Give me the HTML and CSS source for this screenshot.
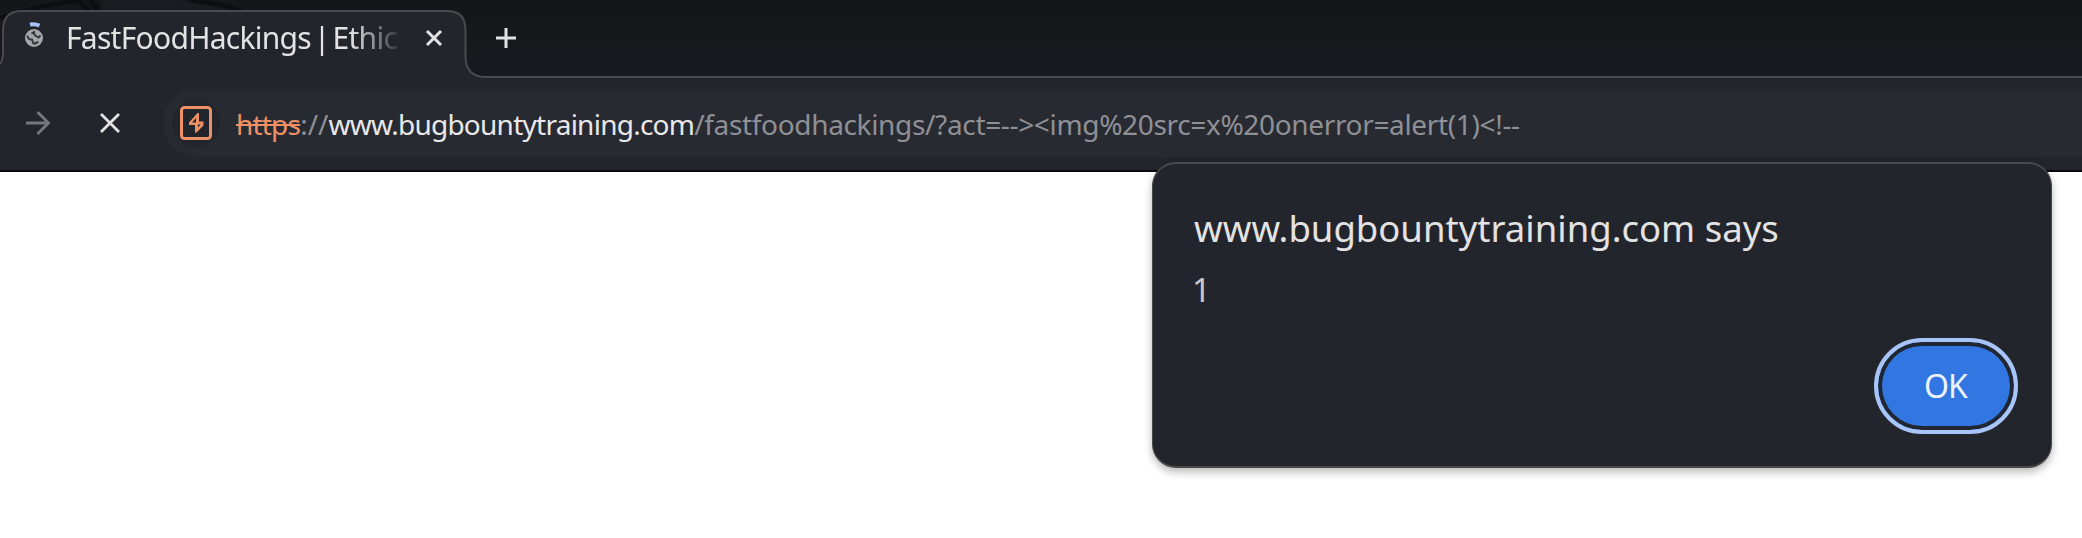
FILE: index.html
```html
<!DOCTYPE html>
<html lang="en">
<head>
<meta charset="utf-8">
<title>FastFoodHackings | Ethical</title>
<link rel="stylesheet" href="styles.css">
</head>
<body>
<div class="browser">
  <header class="tabstrip">
    <svg class="tabstrip-art" width="2082" height="78" viewBox="0 0 2082 78" fill="none">
      <path d="M102 0H180L230 11H102Z" fill="#1b1c21"/>
      <path d="M0 18Q30 8 78 0M190 0Q225 4 245 12" stroke="#0d0e11" stroke-width="4"/>
      <path d="M78 0L92 14M90 0L102 14" stroke="#0d0e11" stroke-width="5"/>
      <path d="M0 78V63Q3 59 3 52V30Q3 11 22 11H447Q465.500 11 465.500 30V56Q465.500 77 486 77H2082V78Z" fill="#23252d"/>
      <path d="M0 64Q3 60 3 52V30Q3 11 22 11H447Q465.500 11 465.500 30V56Q465.500 77 486 77H2082" stroke="#4a4a4c" stroke-width="2"/>
    </svg>
    <div class="tab">
      <svg class="favicon" width="24" height="30" viewBox="0 0 24 30">
        <path d="M8 4.500Q13 3.500 17.500 5.500" fill="none" stroke="#a8c4f8" stroke-width="4"/>
        <circle cx="12" cy="18" r="9" fill="#a5a6aa"/>
        <path d="M5.500 15.500Q6 20 10 19.500L11.500 23.500Q15 23.500 16 21.500M9.500 13.500L12 12L12.500 15L16.500 17.500L18.500 15.500" fill="none" stroke="#34363d" stroke-width="2"/>
      </svg>
      <span class="tab-title">FastFoodHackings | Ethic</span>
      <svg class="tab-close" width="18" height="18" viewBox="0 0 18 18"><path d="M2 2L16 16M16 2L2 16" stroke="#e3e3e3" stroke-width="3"/></svg>
    </div>
    <svg class="new-tab" width="22" height="22" viewBox="0 0 22 22"><path d="M11 1V21M1 11H21" stroke="#e3e3e3" stroke-width="3"/></svg>
  </header>
  <nav class="toolbar">
    <svg class="forward" width="26" height="26" viewBox="0 0 26 26" fill="none"><path d="M1 13H23M12.500 2L23.500 13L12.500 24" stroke="#77787c" stroke-width="2.800"/></svg>
    <svg class="stop" width="22" height="22" viewBox="0 0 22 22"><path d="M2 2L20 20M20 2L2 20" stroke="#e3e3e3" stroke-width="2.800"/></svg>
    <div class="omnibox">
      <div class="site-info">
        <svg width="32" height="34" viewBox="0 0 32 34"><rect x="1.500" y="1.500" width="29" height="31" rx="3" fill="none" stroke="#ee9065" stroke-width="3"/><path d="M19 7V15.500H23.500V19.500L16 27L15 26V19H9V16.500L17.500 7ZM16 12L12 16.500H16ZM18 18.500V21.500L20.500 18.500Z" fill="#ee9065" fill-rule="evenodd"/></svg>
      </div>
      <div class="url"><span class="scheme">https</span><span class="sep">://</span><span class="host">www.bugbountytraining.com</span><span class="path">/fastfoodhackings/?act=--&gt;&lt;img%20src=x%20onerror=alert(1)&lt;!--</span></div>
    </div>
  </nav>
  <main class="page"></main>
</div>
<section class="dialog" role="alertdialog">
  <h1 class="dialog-title">www.bugbountytraining.com says</h1>
  <p class="dialog-message">1</p>
  <div class="dialog-actions"><button class="ok">OK</button></div>
</section>
</body>
</html>
```
FILE: styles.css
```css
* { box-sizing: border-box; }
body {
  margin: 0;
  width: 2082px;
  height: 538px;
  overflow: hidden;
  background: #fff;
  font-family: "Noto Sans", sans-serif;
  font-variant-ligatures: none;
}
svg { display: block; flex: none; }
.browser { display: flex; flex-direction: column; height: 538px; }
.tabstrip {
  position: relative;
  display: flex;
  align-items: flex-start;
  height: 78px;
  background: linear-gradient(#15161a, #191a1f);
}
.tabstrip-art { position: absolute; inset: 0; }
.tab {
  position: relative;
  display: flex;
  width: 466px;
  height: 77px;
  padding: 11px 23px 0 22px;
}
.favicon { margin-top: 9px; }
.tab-title {
  width: 334px;
  margin-left: 20px;
  color: #e3e3e3;
  font-size: 30px;
  letter-spacing: -.72px;
  word-spacing: -4.200px;
  line-height: 53px;
  height: 54px;
  white-space: nowrap;
  mask-image: linear-gradient(90deg, #000 285px, transparent 338px);
}
.tab-close { margin: 18px 0 0 25px; }
.new-tab { position: relative; margin: 27px 0 0 29px; }
.toolbar {
  display: flex;
  align-items: center;
  height: 94px;
  padding: 0 0 2px 25px;
  background: #23252d;
  border-bottom: 2px solid #09090b;
}
.stop { margin-left: 48px; }
.omnibox {
  display: flex;
  align-items: center;
  flex: 1;
  height: 68px;
  margin-left: 42px;
  padding-left: 9px;
  border-radius: 34px 0 0 34px;
  background: #282a32;
}
.site-info {
  display: flex;
  align-items: center;
  justify-content: center;
  width: 48px;
  height: 48px;
  border-radius: 50%;
  background: #23252c;
}
.url {
  margin: 1px 0 0 16px;
  font-size: 28px;
  line-height: 40px;
  white-space: nowrap;
}
.scheme {
  color: #ee9065;
  letter-spacing: -.8px;
  text-decoration: line-through;
  text-decoration-thickness: 2px;
}
.sep, .path { color: #8f9095; }
.host { color: #e8e8ea; letter-spacing: -.75px; }
.path { letter-spacing: -.34px; }
.page { flex: 1; background: #fff; }
.dialog {
  position: absolute;
  left: 1152px;
  top: 162px;
  display: flex;
  flex-direction: column;
  width: 900px;
  height: 306px;
  padding: 39px 33px 32px 41px;
  border: 2px solid #49494a;
  border-left-width: 1px;
  border-right-width: 1px;
  border-radius: 24px;
  background: #23252d;
  box-shadow: 0 4px 8px rgba(0, 0, 0, .28);
}
.dialog-title {
  margin: 0;
  color: #e3e3e3;
  font-size: 36.500px;
  font-weight: 400;
  line-height: 50px;
  white-space: nowrap;
}
.dialog-message {
  margin: 15px 0 0 -2px;
  color: #c7c7c7;
  font-size: 33px;
  line-height: 44px;
}
.dialog-actions { display: flex; justify-content: flex-end; margin-top: auto; }
.ok {
  width: 144px;
  height: 96px;
  padding: 0 1px 2px 0;
  border: 4px solid #a8c4f8;
  border-radius: 48px;
  background: #3276e1;
  box-shadow: inset 0 0 0 4px #202733;
  color: #edf3ff;
  font-family: inherit;
  font-size: 32px;
  letter-spacing: -1px;
}
```
